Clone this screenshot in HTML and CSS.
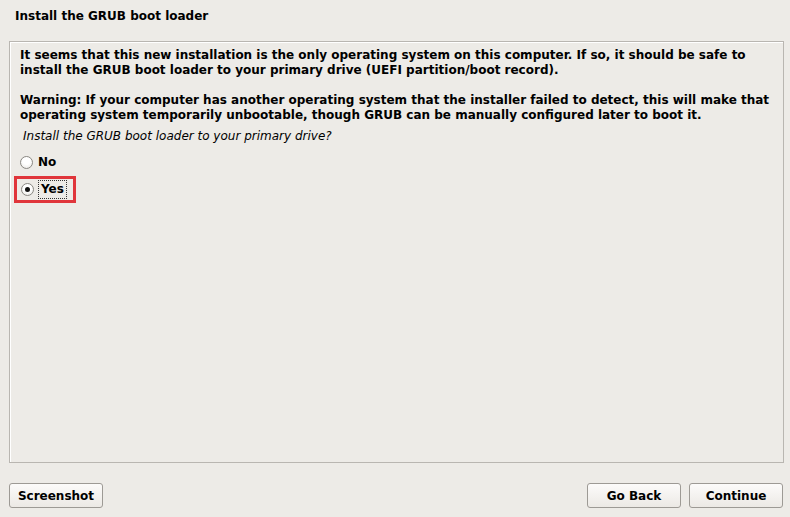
FILE: index.html
```html
<!DOCTYPE html>
<html>
<head>
<meta charset="utf-8">
<link rel="stylesheet" href="styles.css">
</head>
<body>
<div class="page">
  <div class="title">Install the GRUB boot loader</div>
  <div class="panel">
    <p class="msg">It seems that this new installation is the only operating system on this computer. If so, it should be safe to install the GRUB boot loader to your primary drive (UEFI partition/boot record).</p>
    <p class="msg">Warning: If your computer has another operating system that the installer failed to detect, this will make that operating system temporarily unbootable, though GRUB can be manually configured later to boot it.</p>
    <p class="question">Install the GRUB boot loader to your primary drive?</p>
    <div class="options">
      <div class="opt"><span class="radio"></span><span class="label">No</span></div>
      <div class="opt sel"><span class="radio on"></span><span class="label focus">Yes</span></div>
    </div>
  </div>
  <div class="buttons">
    <button class="btn">Screenshot</button>
    <div class="spacer"></div>
    <button class="btn">Go Back</button>
    <button class="btn">Continue</button>
  </div>
</div>
</body>
</html>
```
FILE: styles.css
```css
html, body {
  margin: 0;
  padding: 0;
  background: #edebe7;
  width: 790px;
  height: 517px;
  overflow: hidden;
}
.page {
  font-family: "DejaVu Sans", Verdana, sans-serif;
  font-size: 12px;
  color: #000;
  display: flex;
  flex-direction: column;
  height: 517px;
  box-sizing: border-box;
  padding: 6px 6px 9px 9px;
}
.title {
  font-weight: bold;
  padding-left: 6px;
  height: 35px;
  line-height: 20px;
}
.panel {
  border: 1px solid #b9b6b1;
  box-shadow: inset 1px 1px 0 #ffffff;
  height: 422px;
  box-sizing: border-box;
  padding: 6px 10px 0 10px;
}
.msg {
  margin: 0 0 15px 0;
  font-weight: bold;
  line-height: 15px;
}
.msg + .msg { margin-bottom: 0; }
.question {
  margin: 6px 0 0 3px;
  font-style: italic;
  line-height: 15px;
}
.options {
  display: flex;
  flex-direction: column;
  margin-top: 8px;
}
.opt {
  display: flex;
  align-items: center;
  height: 20px;
  font-weight: bold;
}
.radio {
  width: 11px;
  height: 11px;
  border: 1px solid #8a8883;
  border-radius: 50%;
  background: radial-gradient(circle at 50% 35%, #ffffff 40%, #e6e4e0 100%);
  margin: 0 5px 0 0;
  box-sizing: content-box;
  display: flex;
  align-items: center;
  justify-content: center;
}
.radio.on::after {
  content: "";
  width: 5px;
  height: 5px;
  background: #111;
  border-radius: 50%;
}
.sel {
  margin-top: 4px;
  margin-left: -6px;
  padding-left: 4px;
  width: 52px;
  height: 21px;
  border: 3px solid #e0353b;
}
.focus {
  outline: 1px dotted #333;
  padding: 1px 2px;
  line-height: 15px;
}
.buttons {
  display: flex;
  margin-top: auto;
  gap: 8px;
  padding-right: 1px;
}
.spacer { flex: 1; }
.btn {
  font-family: "DejaVu Sans", Verdana, sans-serif;
  font-size: 12px;
  font-weight: bold;
  height: 25px;
  width: 94px;
  background: linear-gradient(#fcfbfa, #ece9e5);
  border: 1px solid #9d9a95;
  border-radius: 3px;
  color: #000;
  padding: 0;
}
```
